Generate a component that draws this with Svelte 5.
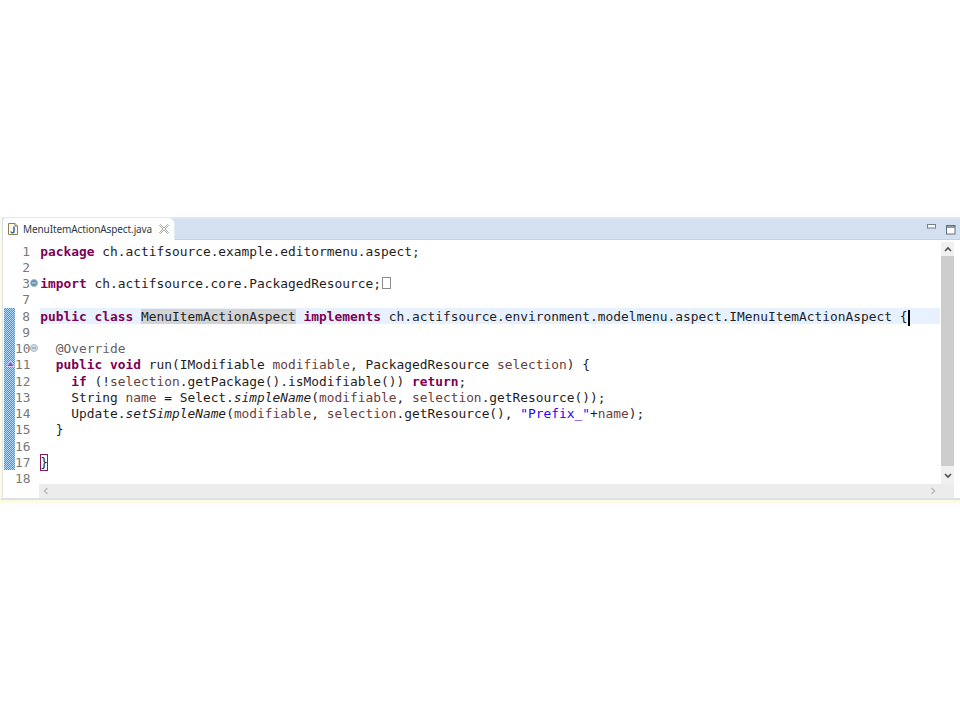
<script>
  // k keyword, v variable, a annotation, s string, i static call
  const t = (text, c = "") => ({ text, c });
  const sel = t("selection", "v");
  const mod = t("modifiable", "v");

  const rows = [
    { n: 1, code: [t("package", "k"), t(" ch.actifsource.example.editormenu.aspect;")] },
    { n: 2, code: [] },
    { n: 3, fold: "open", foldedBox: true, code: [t("import", "k"), t(" ch.actifsource.core.PackagedResource;")] },
    { n: 7, code: [] },
    { n: 8, current: true, code: [t("public", "k"), t(" "), t("class", "k"), t(" "), t("MenuItemActionAspect", "occ"), t(" "), t("implements", "k"), t(" ch.actifsource.environment.modelmenu.aspect.IMenuItemActionAspect {")] },
    { n: 9, code: [] },
    { n: 10, fold: "closed", code: [t("  "), t("@Override", "a")] },
    { n: 11, mark: true, code: [t("  "), t("public", "k"), t(" "), t("void", "k"), t(" run(IModifiable "), mod, t(", PackagedResource "), sel, t(") {")] },
    { n: 12, code: [t("    "), t("if", "k"), t(" (!"), sel, t(".getPackage().isModifiable()) "), t("return", "k"), t(";")] },
    { n: 13, code: [t("    String "), t("name", "v"), t(" = Select."), t("simpleName", "i"), t("("), mod, t(", "), sel, t(".getResource());")] },
    { n: 14, code: [t("    Update."), t("setSimpleName", "i"), t("("), mod, t(", "), sel, t(".getResource(), "), t("\"Prefix_\"", "s"), t("+"), t("name", "v"), t(");")] },
    { n: 15, code: [t("  }")] },
    { n: 16, code: [] },
    { n: 17, code: [t("}", "match")] },
    { n: 18, code: [] },
  ];
</script>

<div class="view">
  <div class="tabbar">
    <div class="tab">
      <svg class="file" width="10" height="12" viewBox="0 0 10 12">
        <path d="M.5 .5h6.500l2.500 2.500v8.500h-9z" fill="#fbf8e8" stroke="#8a8058" />
        <path d="M7 .5v2.500h2.500" fill="#e8e0c4" stroke="#8a8058" />
        <path d="M6 3.500v4.500a1.500 1.500 0 0 1-3 .5" fill="none" stroke="#2f5fa8" stroke-width="1.500" />
      </svg>
      <span class="tab-name">MenuItemActionAspect.java</span>
      <svg class="close" width="10" height="10" viewBox="0 0 10 10">
        <path d="M1.500 .5 5 4 8.500 .5l1 1L6 5l3.500 3.500-1 1L5 6 1.500 9.500l-1-1L4 5 .5 1.500z" fill="#fff" stroke="#9a9a9a" stroke-width=".9" />
      </svg>
    </div>
    <div class="view-actions">
      <svg width="9" height="5" viewBox="0 0 9 5"><rect x=".5" y=".5" width="8" height="3.500" fill="#fff" stroke="#6e7f8e" /></svg>
      <svg class="maximize" width="10" height="10" viewBox="0 0 10 10"><rect x=".5" y=".5" width="8.500" height="8.500" fill="#fff" stroke="#5f6f7e" /><path d="M.5 2h8.500" stroke="#5f6f7e" stroke-width="1.400" /></svg>
    </div>
  </div>

  <div class="editor">
    <div class="body">
      <div class="lines">
        <!-- quick diff strip, drawn once so the checker stays on whole pixels -->
        <svg class="changes" width="11" height="162" shape-rendering="crispEdges">
          <defs>
            <pattern id="checker" width="2" height="2" patternUnits="userSpaceOnUse">
              <rect width="2" height="2" fill="#3d97e8" />
              <rect width="1" height="1" fill="#b4d8f7" />
              <rect x="1" y="1" width="1" height="1" fill="#b4d8f7" />
            </pattern>
          </defs>
          <rect width="11" height="162" fill="url(#checker)" />
        </svg>
        {#each rows as row}
          <div class="row">
            <div class="ruler">
              {#if row.mark}
                <svg class="mark" width="9" height="6" viewBox="0 0 9 6"><path d="M4.500 .5 8.500 5.500H.5z" fill="#7a55d0" stroke="#f6f0fc" stroke-width=".7" /></svg>
              {/if}
            </div>
            <div class="num">{row.n}</div>
            <div class="fold">
              {#if row.fold}
                <svg width="8" height="8" viewBox="0 0 8 8">
                  <circle cx="4" cy="4" r="3.500" fill={row.fold === "open" ? "#5d8fb0" : "#d4dde4"} stroke="#a9b8c4" />
                  <path d="M2 4h4" stroke={row.fold === "open" ? "#dcecf5" : "#7f8f9c"} />
                </svg>
              {/if}
            </div>
            <pre class="code" class:current={row.current}>{#each row.code as part}<span class={part.c}>{part.text}</span>{/each}{#if row.foldedBox}<span class="folded"></span>{/if}{#if row.current}<span class="caret"></span>{/if}</pre>
          </div>
        {/each}
      </div>
      <div class="vscroll">
        <svg width="8" height="6" viewBox="0 0 8 6"><path d="M1 5l3-3 3 3" fill="none" stroke="#505050" stroke-width="1.600" /></svg>
        <div class="thumb"></div>
        <svg class="down" width="8" height="6" viewBox="0 0 8 6"><path d="M1 1l3 3 3-3" fill="none" stroke="#505050" stroke-width="1.600" /></svg>
      </div>
    </div>
    <div class="hscroll">
      <svg width="8" height="8" viewBox="0 0 8 8"><path d="M5.500 1 2.500 4l3 3" fill="none" stroke="#bdbdbd" stroke-width="1.600" /></svg>
      <svg width="8" height="8" viewBox="0 0 8 8"><path d="M2.500 1l3 3-3 3" fill="none" stroke="#bdbdbd" stroke-width="1.600" /></svg>
    </div>
  </div>
</div>
<div class="status"></div>

<style>
  :global(body) {
    background: #fff;
  }

  .view {
    margin-top: 217px;
    height: 283px;
    display: flex;
    flex-direction: column;
    box-sizing: border-box;
    background: #fff;
    border-left: 2px solid #fbfbe6;
    border-bottom: 2px solid #e0e0e0;
  }

  .tabbar {
    height: 22px;
    flex: none;
    display: flex;
    justify-content: space-between;
    background: linear-gradient(#e4e8f4 0, #e4e8f4 1px, #d3e0ef 2px);
    border-bottom: 1px solid #c5d1de;
  }

  .tab {
    width: 171px;
    margin: 1px 0 -1px 1px;
    padding-left: 5px;
    display: flex;
    align-items: center;
    box-sizing: border-box;
    background: #fff;
    border-radius: 4px 6px 0 0;
    box-shadow: 1px 0 0 #e6ebf2;
  }

  .file {
    flex: none;
  }

  .tab-name {
    width: 129px;
    flex: none;
    margin-left: 5px;
    font: 10px "Noto Sans", sans-serif;
    letter-spacing: -0.1px;
    color: #2b3a4a;
    white-space: nowrap;
  }

  .close {
    margin-left: 7px;
    flex: none;
  }

  .view-actions {
    display: flex;
    align-items: flex-start;
    gap: 10px;
    padding: 7px 4px 0 0;
  }

  .maximize {
    margin-top: 1px;
  }

  .editor {
    flex: 1;
    min-height: 0;
    display: flex;
    flex-direction: column;
    border-left: 1px solid #e4e4e4;
  }

  .body {
    height: 244px;
    flex: none;
    display: flex;
  }

  .lines {
    flex: 1;
    min-width: 0;
    padding-top: 2.6px;
    position: relative;
  }

  .changes {
    position: absolute;
    left: 1px;
    top: 68px;
  }

  .row {
    height: 16.25px;
    display: flex;
    align-items: stretch;
  }

  .ruler {
    width: 11px;
    margin-left: 1px;
    flex: none;
    position: relative;
  }

  .mark {
    position: absolute;
    left: 2px;
    top: 5px;
  }

  .num {
    width: 15px;
    flex: none;
    position: relative;
    padding-top: 2px;
    box-sizing: border-box;
    text-align: right;
    font: 12.86px/14px "DejaVu Sans Mono", monospace;
    color: #787878;
  }

  .fold {
    width: 10px;
    flex: none;
    display: flex;
    align-items: center;
  }

  .code {
    flex: 1;
    margin: 0;
    padding: 2px 0 0 0.3px;
    box-sizing: border-box;
    font: 12.86px/14px "DejaVu Sans Mono", monospace;
    color: #1e1e1e;
    white-space: pre;
  }

  .code.current {
    background: #e8f2fe;
  }

  .k {
    font-weight: bold;
    color: #7f0055;
  }

  .v {
    color: #6a3e3e;
  }

  .a {
    color: #646464;
  }

  .s {
    color: #2a00ff;
  }

  .i {
    font-style: italic;
  }

  .occ {
    background: #d4d4d4;
  }

  .match {
    padding: 1px 0;
    box-shadow: inset 0 0 0 1px #8a1a5e;
  }

  .folded {
    display: inline-block;
    width: 7px;
    height: 10px;
    margin-left: 1px;
    vertical-align: -1px;
    border: 1px solid #8c8c8c;
  }

  .caret {
    display: inline-block;
    width: 2px;
    height: 16px;
    margin: -1px 0 -1px 1px;
    vertical-align: -4px;
    background: #000;
  }

  .vscroll {
    width: 13px;
    flex: none;
    box-sizing: border-box;
    margin: 2px 6px 0 1px;
    padding: 4px 0 5px;
    display: flex;
    flex-direction: column;
    align-items: center;
    background: #f0f0f0;
  }

  .thumb {
    flex: 1;
    width: 100%;
    margin-top: 4px;
    background: #cdcdcd;
  }

  .down {
    margin-top: 7px;
  }

  .hscroll {
    height: 14px;
    margin: 0 6px 0 36px;
    padding: 0 17px 0 3px;
    display: flex;
    align-items: center;
    justify-content: space-between;
    background: #ececec;
  }

  .status {
    height: 3px;
    background: #fbfbe6;
  }
</style>
